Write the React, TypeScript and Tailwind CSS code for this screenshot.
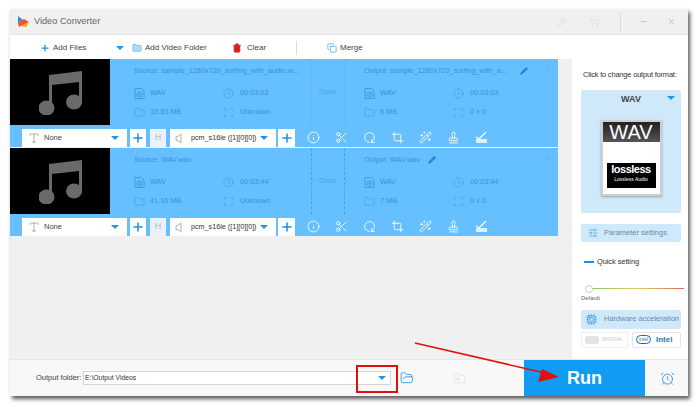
import { Plus, Info, Scissors, RotateCw, Crop, WandSparkles, Stamp, Clock, Folder, Scan, Pencil, X, KeyRound, ShoppingCart, Minus, Trash2, FolderOpen, AlarmClock, Cpu, SlidersHorizontal, FolderInput, Copy, Type, Volume, ChevronRight } from "lucide-react";

const Caret = ({ className = "" }: { className?: string }) => (
  <span className={`inline-block w-0 h-0 border-x-[4px] border-x-transparent border-t-[4px] border-t-[#1f97e8] ${className}`} />
);

const Note = () => (
  <svg width="44" height="46" viewBox="0 0 44 46" fill="#6a6a6a">
    <path d="M10 6 L43 2 V35 H40 V13 L13 16 V41 H10 Z" />
    <ellipse cx="7.5" cy="39" rx="8" ry="7.5" />
    <ellipse cx="35" cy="33" rx="8" ry="7.5" />
  </svg>
);

const FileIcon = () => (
  <svg width="11" height="11" viewBox="0 0 11 11" fill="none" stroke="#3493dc" strokeWidth="0.8">
    <path d="M1 .5 H7.5 L10 3 V10.5 H1 Z" />
    <circle cx="5.5" cy="6.5" r="2.6" />
    <circle cx="5.5" cy="6.5" r="0.8" />
  </svg>
);

const CheckLine = () => (
  <svg width="13" height="12" viewBox="0 0 13 12" fill="none" stroke="white" strokeWidth="1.3">
    <path d="M1 6 L4 8 L11 1" />
    <path d="M1 9 H12 M1 11 H12" />
  </svg>
);

function Meta({ a, b, c, d }: { a: string; b: string; c: string; d: string }) {
  const rowText = "text-[7.3px] leading-none text-[#3493dc]";
  const ic = "text-[#3493dc]";
  return (
    <div className="grid grid-cols-[89px_1fr] gap-y-[7px] mt-[12px]">
      <div className="flex items-center gap-[5px] h-[12px]"><FileIcon /><span className={rowText}>{a}</span></div>
      <div className="flex items-center gap-[6px] h-[12px]"><Clock size={11} strokeWidth={1.1} className={ic} /><span className={rowText}>{b}</span></div>
      <div className="flex items-center gap-[5px] h-[12px]"><Folder size={11} strokeWidth={1.1} className={ic} /><span className={rowText}>{c}</span></div>
      <div className="flex items-center gap-[6px] h-[12px]"><Scan size={11} strokeWidth={1.2} className={ic} /><span className={rowText}>{d}</span></div>
    </div>
  );
}

function Row({ source, output, a, b, c, d, e, f, g, dashed, edit }: { source: string; output: string; a: string; b: string; c: string; d: string; e: string; f: string; g: string; dashed: boolean; edit: number }) {
  const tools = [Info, Scissors, RotateCw, Crop, WandSparkles, Stamp];
  return (
    <div className="bg-[#66c0ff]">
      <div className="flex h-[66px]">
        <div className="w-[100px] bg-black flex items-center justify-center pl-[2px]"><Note /></div>
        <div className="w-[201px] pl-[24px] pt-[7px]">
          <div className="text-[7.3px] leading-[9px] text-[#3493dc] whitespace-nowrap">{source}</div>
          <Meta a={a} b={b} c={c} d={d} />
        </div>
        <div className={`w-[34px] flex items-center justify-between relative ${dashed ? "border-x border-dashed border-[#3fa5ee]" : "border-x border-[#60b8f8]"}`}>
          {dashed && <ChevronRight size={12} strokeWidth={1} className="absolute -left-[5px] top-[27px] text-[#3fa5ee]" />}
          <span className="text-[7.5px] leading-none text-[#3fa5ee] w-full text-center">Done</span>
          {dashed && <ChevronRight size={12} strokeWidth={1} className="absolute -right-[8px] top-[27px] text-[#3fa5ee]" />}
        </div>
        <div className="flex-1 pl-[19px] pt-[7px] relative">
          <div className="flex items-center gap-[6px] h-[9px]">
            <span className="text-[7.3px] leading-[9px] text-[#3493dc] whitespace-nowrap" style={{ width: edit }}>{output}</span>
            <Pencil size={8} className="text-[#1e84e0] fill-[#1e84e0]" />
          </div>
          <Meta a={e} b={b} c={f} d={g} />
          <X size={9} strokeWidth={1} className="absolute right-[6px] top-[5px] text-[#4ea8ee]" />
        </div>
      </div>
      <div className="flex items-center h-[22px] pl-[12px] pt-[4px]">
        <div className="w-[105px] h-[18px] bg-white flex items-center pl-[6px] pr-[8px]">
          <Type size={12} strokeWidth={1} className="text-[#666]" />
          <span className="ml-[4px] text-[7.5px] text-[#444] flex-1">None</span>
          <Caret />
        </div>
        <div className="ml-[3px] w-[16px] h-[18px] bg-white flex items-center justify-center"><Plus size={14} strokeWidth={2.6} className="text-[#1b8fe6]" /></div>
        <div className="ml-[4px] w-[16px] h-[18px] bg-[#e9f2fa] flex items-center justify-center text-[9px] text-[#b5b5b5]">H</div>
        <div className="ml-[4px] w-[106px] h-[18px] bg-white flex items-center pl-[5px] pr-[8px]">
          <Volume size={13} strokeWidth={1} className="text-[#666]" />
          <span className="ml-[3px] text-[7.2px] text-[#333] flex-1 whitespace-nowrap">pcm_s16le ([1][0][0])</span>
          <Caret />
        </div>
        <div className="ml-[2px] w-[17px] h-[18px] bg-white flex items-center justify-center"><Plus size={14} strokeWidth={2.6} className="text-[#1b8fe6]" /></div>
        <div className="flex items-center ml-[12px] gap-[15px] -mt-[2px]">
          {tools.map((T, i) => <T key={i} size={13} strokeWidth={1.6} className={i === 2 ? "text-white rotate-90" : "text-white"} />)}
          <CheckLine />
        </div>
      </div>
    </div>
  );
}

export default function App() {
  return (
    <div className="relative w-[700px] h-[407px] bg-white overflow-hidden pt-[9px] pl-[10px]" style={{ fontFamily: '"Liberation Sans", Arial, sans-serif' }}>
      <div className="w-[678px] h-[387px] flex flex-col bg-[#f0f0f0] shadow-[2px_3px_4px_rgba(0,0,0,0.65)]">
        {/* title bar */}
        <div className="h-[26px] flex items-center bg-[#f0f0f0] border-b border-[#e4e4e4] shrink-0">
          <svg width="12" height="13" viewBox="0 0 12 13" className="ml-[7px]">
            <path d="M1 1 L6 5 L1 8 Z" fill="#2a8fe0" />
            <path d="M1 8 L7 4 L12 7 L2 12 Z" fill="#f0542d" />
            <path d="M4 11 L12 7 L9 12 Z" fill="#f5a623" />
          </svg>
          <span className="ml-[5px] text-[9.2px] text-[#666]">Video Converter</span>
          <div className="ml-auto flex items-center">
            <KeyRound size={10} strokeWidth={1} className="text-[#d0d0d0]" />
            <ShoppingCart size={10} strokeWidth={1} className="text-[#d0d0d0] ml-[22px]" />
            <div className="w-px h-[20px] bg-[#dcdcdc] ml-[21px]" />
            <Minus size={9} strokeWidth={1.2} className="text-[#999] ml-[18px]" />
            <X size={9} strokeWidth={1.2} className="text-[#888] ml-[19px] mr-[12px]" />
          </div>
        </div>
        {/* toolbar */}
        <div className="h-[24px] bg-white flex items-center shrink-0 text-[8px] text-[#444] pt-[1px]">
          <Plus size={10} strokeWidth={3} className="text-[#1b8fe6] ml-[30px]" />
          <span className="ml-[3px] w-[63px]">Add Files</span>
          <Caret />
          <Folder size={10} strokeWidth={1} className="text-[#1b8fe6] fill-[#aadcfa] ml-[8px]" />
          <span className="ml-[3px] w-[87px]">Add Video Folder</span>
          <Trash2 size={10} strokeWidth={1.5} className="text-[#d4211c] fill-[#d4211c]" />
          <span className="ml-[5px] w-[49px]">Clear</span>
          <div className="w-px h-[14px] bg-[#ddd]" />
          <Copy size={10} strokeWidth={1.4} className="text-[#1b8fe6] ml-[30px]" />
          <span className="ml-[3px]">Merge</span>
        </div>
        {/* main */}
        <div className="flex-1 flex min-h-0">
          <div className="w-[548px] flex flex-col gap-px">
            <Row source="Source: sample_1280x720_surfing_with_audio.w..." output="Output: sample_1280x720_surfing_with_a..." a="WAV" b="00:03:03" c="33.53 MB" d="Unknown" e="WAV" f="6 MB" g="0 x 0" dashed={false} edit={150} />
            <Row source="Source: WAV.wav" output="Output: WAV.wav" a="WAV" b="00:03:44" c="41.10 MB" d="Unknown" e="WAV" f="7 MB" g="0 x 0" dashed edit={58} />
          </div>
          <div className="ml-[14px] w-[116px] bg-white pl-[9px] pr-[7px] relative">
            <div className="text-[7.5px] tracking-[-0.2px] leading-none text-[#333] mt-[12px] ml-[2px] whitespace-nowrap">Click to change output format:</div>
            <div className="mt-[11px] h-[123px] bg-[#cfe9fb] rounded-[2px] relative flex flex-col items-center">
              <div className="text-[9px] font-bold text-[#444] mt-[5px] leading-none">WAV</div>
              <Caret className="absolute right-[6px] top-[6px]" />
              <div className="mt-[16px] w-[61px] h-[76px] bg-white border-[2px] border-[#cfcfcf] flex flex-col items-center shadow-[0_1px_2px_rgba(0,0,0,0.3)]">
                <div className="w-full h-[20px] bg-gradient-to-b from-[#222] to-[#555] text-white text-[20px] leading-[20px] text-center">WAV</div>
                <div className="mt-[21px] w-[49px] h-[25px] bg-black flex flex-col items-center text-white">
                  <span className="text-[11px] font-bold leading-[12px] tracking-[-0.5px]">lossless</span>
                  <span className="text-[5px] leading-[9px]">Lossless Audio</span>
                </div>
              </div>
            </div>
            <div className="mt-[11px] h-[18px] bg-[#cfe9fb] rounded-[2px] flex items-center pl-[7px]">
              <SlidersHorizontal size={10} strokeWidth={1.4} className="text-[#1b8fe6]" />
              <span className="ml-[6px] text-[7.5px] text-[#6e8aa0]">Parameter settings</span>
            </div>
            <div className="mt-[15px] flex items-center h-[10px] pl-[3px]">
              <div className="w-[10px] h-[2px] bg-[#1b8fe6]" />
              <span className="ml-[3px] text-[7.5px] tracking-[-0.1px] text-[#333]">Quick setting</span>
            </div>
            <div className="relative mt-[18px] h-[8px] ml-[4px]">
              <div className="absolute left-[4px] right-[-3px] top-[3px] h-[1px] bg-gradient-to-r from-[#7ac96b] via-[#d8d060] to-[#e0605a]" />
              <div className="absolute left-0 top-0 w-[8px] h-[8px] rounded-full bg-white border border-[#ccc]" />
            </div>
            <div className="text-[6px] leading-none text-[#666] mt-[2px]">Default</div>
            <div className="mt-[9px] h-[19px] bg-[#cfe9fb] rounded-[2px] flex items-center pl-[5px]">
              <Cpu size={11} strokeWidth={1.5} className="text-[#1b8fe6]" />
              <span className="ml-[7px] text-[7.5px] text-[#6e8aa0] whitespace-nowrap">Hardware acceleration</span>
            </div>
            <div className="mt-[3px] flex gap-[4px] h-[16px]">
              <div className="w-[47px] border border-[#f0f0f0] flex items-center pl-[3px] text-[6px] text-[#c8c8c8]">
                <div className="w-[14px] h-[8px] bg-[#e4e4e4] rounded-[2px] mr-[3px]" />NVIDIA
              </div>
              <div className="w-[49px] border border-[#e4e4e4] rounded-[2px] flex items-center pl-[3px] text-[8px] font-bold text-[#2a78b8]">
                <div className="w-[15px] h-[9px] border border-[#1a6cb0] rounded-full mr-[5px] text-[5px] leading-[7px] text-center font-normal">intel</div>Intel
              </div>
            </div>
          </div>
        </div>
        {/* bottom */}
        <div className="h-[37px] bg-[#f8f8f8] border-t border-[#e6e6e6] flex items-center shrink-0">
          <span className="ml-[26px] w-[47px] text-[7.5px] text-[#444] whitespace-nowrap">Output folder:</span>
          <div className="w-[308px] h-[14px] bg-white border border-[#d4d4d4] flex items-center pl-[1px] pr-[4px] text-[6.8px] text-[#333]">
            <span className="flex-1">E:\Output Videos</span>
            <Caret />
          </div>
          <FolderOpen size={14} strokeWidth={1.4} className="text-[#1b8fe6] ml-[9px]" />
          <FolderInput size={13} strokeWidth={1} className="text-[#bcdcf2] ml-[39px]" />
          <div className="ml-[58px] w-[121px] self-stretch bg-[#0f9cf2] text-white font-bold text-[18px] flex items-center justify-center">Run</div>
          <AlarmClock size={15} strokeWidth={1.3} className="text-[#1b8fe6] ml-[15px]" />
        </div>
      </div>
      {/* annotation overlays */}
      <div className="absolute left-[356px] top-[365px] w-[42px] h-[28px] border-[2px] border-[#e01010]" />
      <svg className="absolute left-0 top-0 pointer-events-none" width="700" height="407">
        <path d="M415 343 L545 373" stroke="#e01010" strokeWidth="1.6" />
        <path d="M559 377 L538 382 L542 369 Z" fill="#e01010" />
      </svg>
    </div>
  );
}
